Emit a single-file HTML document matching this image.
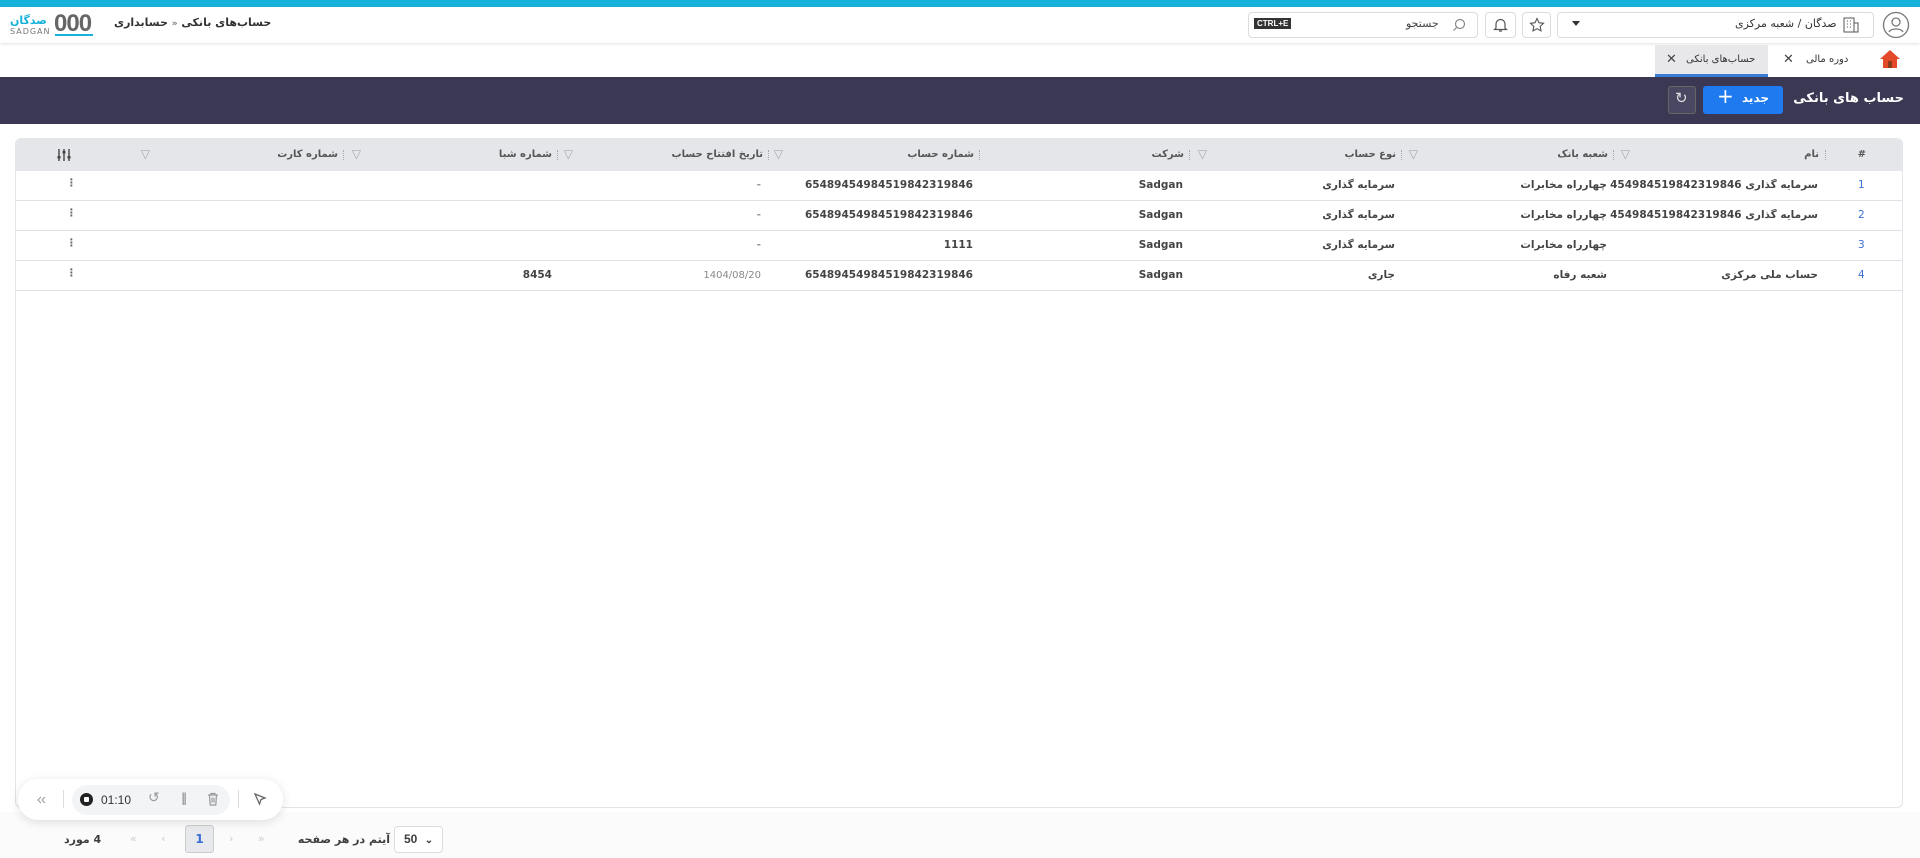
<!DOCTYPE html>
<html><head><meta charset="utf-8">
<style>
*{box-sizing:border-box;margin:0;padding:0}
body{width:1920px;height:858px;overflow:hidden;background:#fff;font-family:"DejaVu Sans","Liberation Sans",sans-serif;color:#3d3d3d;position:relative;font-size:12px}
.a{position:absolute;white-space:nowrap}
.topbar{left:0;top:0;width:1920px;height:7px;background:#17b2da}
.hdr{left:0;top:7px;width:1920px;height:36px;background:#fff;box-shadow:0 1px 3px rgba(0,0,0,.12)}
.box{border:1px solid #dcdcdc;border-radius:4px;background:#fff}
.dark{left:0;top:77px;width:1920px;height:47px;background:#3b3854}
.tbl{left:15px;top:138px;width:1888px;height:670px;background:#fff;border:1px solid #e3e5ea;border-radius:6px;overflow:hidden}
.th{left:0;top:0;width:1888px;height:32px;background:#e4e6ea}
.row{left:0;width:1888px;height:30px;border-bottom:1px solid #dfe1e5}
.t{position:absolute;white-space:nowrap;direction:rtl;font-size:10.5px;font-weight:bold;color:#444}
.h{position:absolute;white-space:nowrap;direction:rtl;font-size:10px;font-weight:bold;color:#555;top:10px}
.f{position:absolute;top:8px;color:#aaa;font-size:12px}
.sep{position:absolute;top:11px;width:1px;height:10px;border-left:1px dotted #aaa}
</style></head><body>
<div class="a topbar"></div>
<div class="a hdr"></div>
<div class="a" style="left:10px;top:14px;font-size:11px;color:#17b2da;font-weight:bold">صدگان</div>
<div class="a" style="left:10px;top:27px;font-size:8px;color:#777;letter-spacing:1px">SADGAN</div>
<div class="a" style="left:54px;top:10px;font-size:24px;font-weight:bold;color:#666;font-family:'Liberation Sans';letter-spacing:-1px">000</div>
<div class="a" style="left:55px;top:34px;width:38px;height:2px;background:#17b2da"></div>
<div class="a" style="left:114px;top:16px;font-size:11px;font-weight:bold;direction:rtl;color:#333">حساب‌های بانکی <span style="font-size:9px;color:#777">«</span> حسابداری</div>
<div class="a box" style="left:1248px;top:12px;width:230px;height:26px"></div>
<div class="a" style="left:1254px;top:18px;background:#333;color:#fff;font-size:8px;font-weight:bold;padding:1px 3px;font-family:'Liberation Sans'">CTRL+E</div>
<div class="a" style="left:1406px;top:17px;font-size:11px;direction:rtl;color:#444">جستجو</div>
<svg class="a" style="left:1452px;top:18px" width="14" height="14" viewBox="0 0 14 14"><circle cx="8" cy="6" r="4.5" fill="none" stroke="#888" stroke-width="1.2"/><path d="M5 9 L1.5 12.5" stroke="#888" stroke-width="1.2"/></svg>
<div class="a box" style="left:1485px;top:12px;width:31px;height:26px"></div>
<svg class="a" style="left:1493px;top:17px" width="15" height="16" viewBox="0 0 15 16"><path d="M3 11V7a4.5 4.5 0 0 1 9 0v4l1.5 1.5h-12z M6 14h3" fill="none" stroke="#555" stroke-width="1.2"/></svg>
<div class="a box" style="left:1522px;top:12px;width:29px;height:26px"></div>
<svg class="a" style="left:1529px;top:17px" width="16" height="16" viewBox="0 0 16 16"><path d="M8 1.5l2 4.2 4.5.6-3.3 3.1.8 4.5L8 11.7l-4 2.2.8-4.5L1.5 6.3 6 5.7z" fill="none" stroke="#555" stroke-width="1.1"/></svg>
<div class="a box" style="left:1557px;top:12px;width:317px;height:26px"></div>
<div class="a" style="left:1572px;top:21px;width:0;height:0;border-left:4px solid transparent;border-right:4px solid transparent;border-top:5px solid #333"></div>
<div class="a" style="left:1735px;top:17px;font-size:11px;direction:rtl;color:#333">صدگان / شعبه مرکزی</div>
<svg class="a" style="left:1843px;top:17px" width="16" height="16" viewBox="0 0 16 16"><rect x="1" y="1" width="10" height="14" fill="none" stroke="#555"/><rect x="11" y="6" width="4" height="9" fill="none" stroke="#555"/><path d="M4 4h1M7 4h1M4 7h1M7 7h1M4 10h1M7 10h1" stroke="#555"/></svg>
<svg class="a" style="left:1882px;top:11px" width="28" height="28" viewBox="0 0 28 28"><circle cx="14" cy="14" r="12.5" fill="none" stroke="#777" stroke-width="1.3"/><circle cx="14" cy="11" r="4" fill="none" stroke="#777" stroke-width="1.3"/><path d="M7 21c2-4 12-4 14 0" fill="none" stroke="#777" stroke-width="1.3"/></svg>
<div class="a" style="left:1655px;top:45px;width:113px;height:32px;background:#e8e8ea;border-bottom:3px solid #3a7bd5"></div>
<div class="a" style="left:1666px;top:52px;font-size:13px;color:#444">✕</div>
<div class="a" style="left:1686px;top:54px;font-size:10px;direction:rtl;color:#333">حساب‌های بانکی</div>
<div class="a" style="left:1783px;top:52px;font-size:13px;color:#444">✕</div>
<div class="a" style="left:1806px;top:54px;font-size:10px;direction:rtl;color:#333">دوره مالی</div>
<svg class="a" style="left:1879px;top:49px" width="22" height="20" viewBox="0 0 22 20"><path d="M11 1L1 10h3v9h14v-9h3z" fill="#e24a2a"/><rect x="9" y="12" width="4" height="7" fill="#8a3b1b"/></svg>
<div class="a dark"></div>
<div class="a" style="right:16px;top:91px;font-size:13px;font-weight:bold;color:#fff;direction:rtl">حساب های بانکی</div>
<div class="a" style="left:1703px;top:86px;width:80px;height:28px;background:#1f7af0;border-radius:3px"></div>
<div class="a" style="left:1742px;top:91px;font-size:12px;font-weight:bold;color:#fff;direction:rtl">جدید</div>
<div class="a" style="left:1717px;top:84px;font-size:20px;color:#fff">+</div>
<div class="a" style="left:1668px;top:86px;width:28px;height:28px;border:1px solid #666;border-radius:3px;background:#4a4762"></div>
<div class="a" style="left:1675px;top:89px;font-size:15px;color:#ddd">↻</div>
<div class="a tbl">
 <div class="a th">
  <div class="h" style="right:38px">#</div>
  <div class="h" style="right:85px">نام</div><div class="sep" style="right:78px"></div><div class="f" style="right:274px">▽</div>
  <div class="h" style="right:296px">شعبه بانک</div><div class="sep" style="right:290px"></div><div class="f" style="right:486px">▽</div>
  <div class="h" style="right:508px">نوع حساب</div><div class="sep" style="right:502px"></div><div class="f" style="right:697px">▽</div>
  <div class="h" style="right:720px">شرکت</div><div class="sep" style="right:714px"></div>
  <div class="h" style="right:930px">شماره حساب</div><div class="sep" style="right:924px"></div><div class="f" style="right:1121px">▽</div>
  <div class="h" style="right:1141px">تاریخ افتتاح حساب</div><div class="sep" style="right:1135px"></div><div class="f" style="right:1331px">▽</div>
  <div class="h" style="right:1352px">شماره شبا</div><div class="sep" style="right:1346px"></div><div class="f" style="right:1543px">▽</div>
  <div class="h" style="right:1566px">شماره کارت</div><div class="sep" style="right:1560px"></div><div class="f" style="right:1754px">▽</div>
  <svg class="a" style="left:40px;top:9px" width="16" height="14" viewBox="0 0 16 14"><path d="M3 1v12M8 1v12M13 1v12" stroke="#444" stroke-width="1.4"/><rect x="1.5" y="8" width="3" height="2.5" fill="#444"/><rect x="6.5" y="3" width="3" height="2.5" fill="#444"/><rect x="11.5" y="8" width="3" height="2.5" fill="#444"/></svg>
 </div>
 <div class="a row" style="top:32px">
  <div class="t" style="left:1842px;top:8px;color:#3b6fd6;font-weight:normal">1</div>
  <div class="t" style="right:86px;top:8px;width:208px;overflow:hidden;text-align:right">سرمایه گذاری 65489454984519842319846</div>
  <div class="t" style="right:297px;top:8px">چهارراه مخابرات</div>
  <div class="t" style="right:509px;top:8px">سرمایه گذاری</div>
  <div class="t" style="right:721px;top:8px">Sadgan</div>
  <div class="t" style="right:931px;top:8px">65489454984519842319846</div>
  <div class="t" style="right:1143px;top:8px;color:#999">-</div>
  <div class="t" style="left:50px;top:6px;color:#666">⋮</div>
 </div>
 <div class="a row" style="top:62px">
  <div class="t" style="left:1842px;top:8px;color:#3b6fd6;font-weight:normal">2</div>
  <div class="t" style="right:86px;top:8px;width:208px;overflow:hidden;text-align:right">سرمایه گذاری 65489454984519842319846</div>
  <div class="t" style="right:297px;top:8px">چهارراه مخابرات</div>
  <div class="t" style="right:509px;top:8px">سرمایه گذاری</div>
  <div class="t" style="right:721px;top:8px">Sadgan</div>
  <div class="t" style="right:931px;top:8px">65489454984519842319846</div>
  <div class="t" style="right:1143px;top:8px;color:#999">-</div>
  <div class="t" style="left:50px;top:6px;color:#666">⋮</div>
 </div>
 <div class="a row" style="top:92px">
  <div class="t" style="left:1842px;top:8px;color:#3b6fd6;font-weight:normal">3</div>
  <div class="t" style="right:297px;top:8px">چهارراه مخابرات</div>
  <div class="t" style="right:509px;top:8px">سرمایه گذاری</div>
  <div class="t" style="right:721px;top:8px">Sadgan</div>
  <div class="t" style="right:931px;top:8px">1111</div>
  <div class="t" style="right:1143px;top:8px;color:#999">-</div>
  <div class="t" style="left:50px;top:6px;color:#666">⋮</div>
 </div>
 <div class="a row" style="top:122px">
  <div class="t" style="left:1842px;top:8px;color:#3b6fd6;font-weight:normal">4</div>
  <div class="t" style="right:86px;top:8px">حساب ملی مرکزی</div>
  <div class="t" style="right:297px;top:8px">شعبه رفاه</div>
  <div class="t" style="right:509px;top:8px">جاری</div>
  <div class="t" style="right:721px;top:8px">Sadgan</div>
  <div class="t" style="right:931px;top:8px">65489454984519842319846</div>
  <div class="t" style="right:1143px;top:9px;color:#888;font-weight:normal;font-size:10px">1404/08/20</div>
  <div class="t" style="right:1352px;top:8px">8454</div>
  <div class="t" style="left:50px;top:6px;color:#666">⋮</div>
 </div>
</div>
<div class="a" style="left:0;top:812px;width:1920px;height:46px;background:#fbfbfc"></div>
<div class="a" style="left:64px;top:833px;font-size:11px;font-weight:bold;direction:rtl">4 مورد</div>
<div class="a" style="left:130px;top:832px;color:#ccc;font-size:11px">«&nbsp;&nbsp;&nbsp;&nbsp;&nbsp;&nbsp;&nbsp;‹</div>
<div class="a" style="left:185px;top:825px;width:29px;height:28px;background:#e8e9ec;border:1px solid #ccc;border-radius:3px;color:#3b6fd6;text-align:center;line-height:26px;font-weight:bold">1</div>
<div class="a" style="left:229px;top:832px;color:#ccc;font-size:11px">›&nbsp;&nbsp;&nbsp;&nbsp;&nbsp;&nbsp;&nbsp;»</div>
<div class="a" style="right:1530px;top:833px;font-size:11px;font-weight:bold;direction:rtl">آیتم در هر صفحه</div>
<div class="a box" style="left:394px;top:826px;width:49px;height:27px"></div>
<div class="a" style="left:404px;top:832px;font-size:12px;font-weight:bold;font-family:'Liberation Sans'">50 <span style="font-size:10px;margin-left:4px">⌄</span></div>
<div class="a" style="left:18px;top:779px;width:265px;height:41px;background:#fff;border-radius:20px;box-shadow:0 2px 10px rgba(0,0,0,.12)"></div>
<svg class="a" style="left:36px;top:795px" width="10" height="10" viewBox="0 0 10 10"><path d="M5 2L2 5l3 3M9 2L6 5l3 3" fill="none" stroke="#999" stroke-width="1"/></svg>
<div class="a" style="left:63px;top:790px;width:1px;height:18px;background:#ddd"></div>
<div class="a" style="left:72px;top:785px;width:158px;height:30px;background:#f3f4f6;border-radius:15px"></div>
<div class="a" style="left:80px;top:793px;width:13px;height:13px;border-radius:50%;background:#222"></div>
<div class="a" style="left:84px;top:797px;width:5px;height:5px;background:#fff;border-radius:1px"></div>
<div class="a" style="left:101px;top:793px;font-size:12px;color:#333;font-family:'Liberation Sans'">01:10</div>
<div class="a" style="left:148px;top:790px;color:#999;font-size:14px">↺</div>
<div class="a" style="left:181px;top:791px;color:#999;font-size:12px;font-weight:bold">‖</div>
<svg class="a" style="left:207px;top:792px" width="12" height="14" viewBox="0 0 12 14"><path d="M1 3h10M4 3V1.5h4V3M2.5 3l.7 10h5.6l.7-10M5 5.5v5M7 5.5v5" fill="none" stroke="#999" stroke-width="1.2"/></svg>
<div class="a" style="left:238px;top:790px;width:1px;height:18px;background:#ddd"></div>
<svg class="a" style="left:253px;top:792px" width="14" height="14" viewBox="0 0 14 14"><path d="M2 2l10 4-4 1.5L6.5 12z" fill="none" stroke="#666" stroke-width="1.3"/></svg>
</body></html>
